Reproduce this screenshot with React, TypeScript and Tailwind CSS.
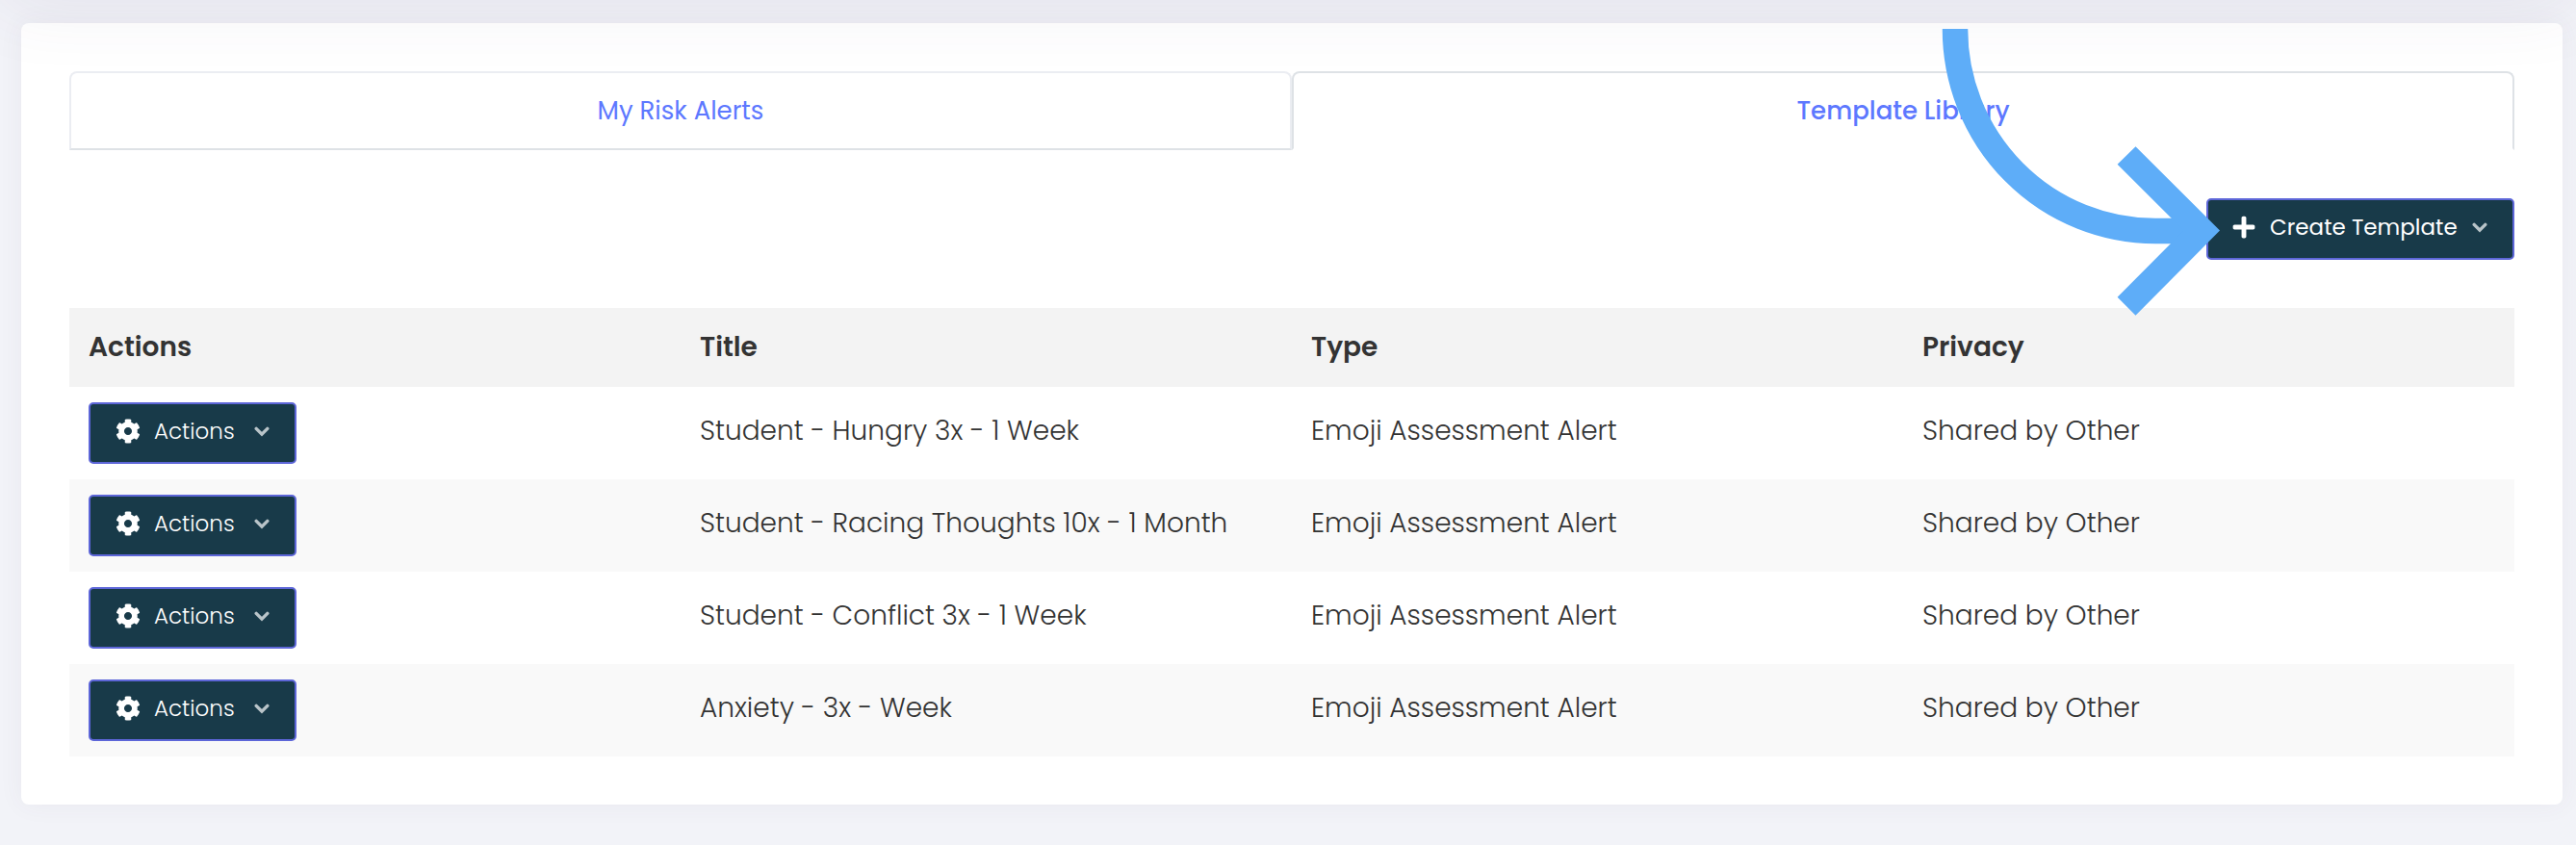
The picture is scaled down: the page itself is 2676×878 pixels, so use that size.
import { FaCog, FaPlus } from "react-icons/fa";

type Template = { title: string; type: string; privacy: string };

const templates: Template[] = [
  { title: "Student - Hungry 3x - 1 Week", type: "Emoji Assessment Alert", privacy: "Shared by Other" },
  { title: "Student - Racing Thoughts 10x - 1 Month", type: "Emoji Assessment Alert", privacy: "Shared by Other" },
  { title: "Student - Conflict 3x - 1 Week", type: "Emoji Assessment Alert", privacy: "Shared by Other" },
  { title: "Anxiety - 3x - Week", type: "Emoji Assessment Alert", privacy: "Shared by Other" },
];

const columns = ["Actions", "Title", "Type", "Privacy"];

function Chevron() {
  return (
    <svg viewBox="0 0 16 11" className="ml-auto h-[11px] w-4" fill="none" aria-hidden="true">
      <path d="M2.200 2.400 8 8.200l5.800-5.800" stroke="#b9c4c9" strokeWidth="3.400" strokeLinecap="round" />
    </svg>
  );
}

function CurvedArrow() {
  return (
    <svg
      viewBox="0 0 290 298"
      className="pointer-events-none absolute -top-44 right-[305px] z-10 h-[298px] w-[290px]"
      fill="none"
      aria-hidden="true"
    >
      <path d="M14 0A208 210 0 0 0 222 210H262" stroke="#5eadf8" strokeWidth="26.500" />
      <path d="M201.500 122.300 289 209.500 201.500 297.700 182.600 278.700 251.500 209.500 182.600 140.700Z" fill="#5eadf8" />
    </svg>
  );
}

const buttonClass =
  "flex h-16 items-center gap-3.5 rounded-[5px] border-2 border-[#5d66d8] bg-[#183a49] pb-1 text-[23px] text-white";

export default function App() {
  return (
    <div className="relative min-h-screen overflow-hidden bg-[#f2f3f8] pt-6 pr-3.5 pb-10 pl-[22px] font-['Poppins','Inter',sans-serif] text-[#333]">
      <div className="pointer-events-none absolute inset-x-0 -top-20 z-10 h-20 shadow-[0_0_80px_0_rgba(82,63,105,0.1)]" />
      <main className="rounded-lg bg-white p-[50px] shadow-[0_0_26px_0_rgba(82,63,105,0.06)]">
        <div role="tablist" className="grid grid-cols-2 text-[26px] leading-9 text-[#5d78ff]">
          <button
            role="tab"
            aria-selected="false"
            className="h-[82px] rounded-t-lg border-2 border-[#ebedf2] border-b-[#dee2e6]"
          >
            My Risk Alerts
          </button>
          <button
            role="tab"
            aria-selected="true"
            className="h-[82px] rounded-t-lg border-2 border-[#dee2e6] border-b-white font-medium"
          >
            Template Library
          </button>
        </div>

        <div className="relative mt-[50px] flex justify-end">
          <button className={`${buttonClass} w-80 pr-[26px] pl-6`}>
            <FaPlus className="size-[26px]" />
            <span>Create Template</span>
            <Chevron />
          </button>
          <CurvedArrow />
        </div>

        <table className="mt-[50px] w-full table-fixed text-left text-[28px] leading-9">
          <thead>
            <tr className="h-[82px] bg-[#f3f3f3]">
              {columns.map((column) => (
                <th key={column} scope="col" className="px-5 font-semibold">
                  {column}
                </th>
              ))}
            </tr>
          </thead>
          <tbody className="font-light">
            {templates.map((template) => (
              <tr key={template.title} className="h-24 even:bg-[#f9f9f9]">
                <td className="px-5">
                  <button className={`${buttonClass} w-[216px] px-[26px]`}>
                    <FaCog className="size-[26px]" />
                    <span>Actions</span>
                    <Chevron />
                  </button>
                </td>
                <td className="px-5 pb-1 whitespace-nowrap">{template.title}</td>
                <td className="px-5 pb-1 whitespace-nowrap">{template.type}</td>
                <td className="px-5 pb-1 whitespace-nowrap">{template.privacy}</td>
              </tr>
            ))}
          </tbody>
        </table>
      </main>
    </div>
  );
}
